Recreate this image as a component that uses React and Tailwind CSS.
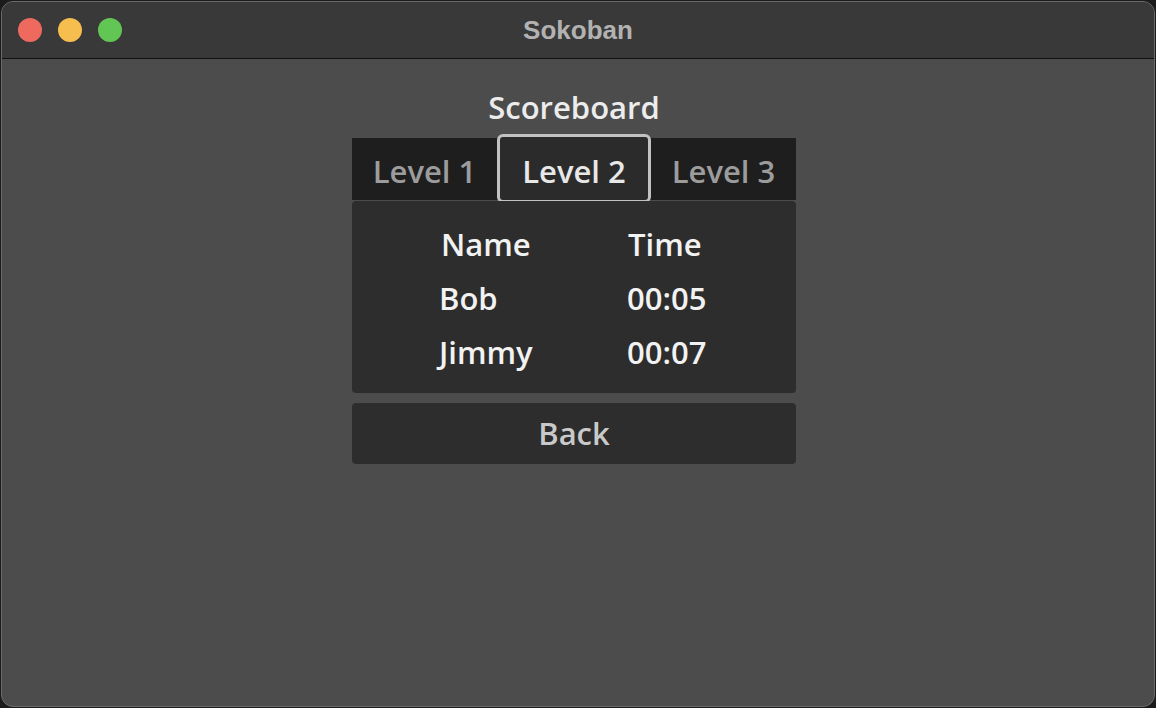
import React, { useState } from "react";

const levels = ["Level 1", "Level 2", "Level 3"];

const scores = [
  { name: "Bob", time: "00:05" },
  { name: "Jimmy", time: "00:07" },
];

const App = () => {
  const [active, setActive] = useState(1);

  return (
    <div className="w-[1156px] h-[708px] bg-[#1b1b1b] p-[1px] overflow-hidden">
      {/* Window */}
      <div className="w-full h-full flex flex-col rounded-[12px] border border-[#6a6a6a] bg-[#4c4c4c] overflow-hidden">
        {/* Title bar */}
        <div className="relative h-[57px] shrink-0 flex items-center bg-[#393939] border-b border-[#111]">
          <div className="flex items-center gap-[16px] pl-[16px]">
            <span className="w-[24px] h-[24px] rounded-full bg-[#ee6a5f]" />
            <span className="w-[24px] h-[24px] rounded-full bg-[#f5be4f]" />
            <span className="w-[24px] h-[24px] rounded-full bg-[#62c655]" />
          </div>
          <div className="absolute inset-0 flex items-center justify-center pointer-events-none">
            <span className="font-['Liberation_Sans',Arial,sans-serif] font-bold text-[26px] text-[#b2b2b2]">
              Sokoban
            </span>
          </div>
        </div>

        {/* Content */}
        <div className="flex-1 flex flex-col items-center pt-[26px] pr-[8px] font-['Open_Sans','Noto_Sans',sans-serif] font-semibold">
          <div className="text-[31px] leading-[44px] text-[#ececec]">Scoreboard</div>

          <div className="w-[444px] mt-[9px] flex flex-col">
            {/* Tabs */}
            <div className="h-[62px] bg-[#1e1e1e] flex items-stretch">
              {levels.map((lvl, i) => (
                <button
                  key={lvl}
                  onClick={() => setActive(i)}
                  className={
                    i === active
                      ? "w-[154px] -mt-[4px] -mb-[3px] pt-[5px] rounded-[6px] border-[3px] border-[#c2c2c2] bg-[#2b2b2b] text-[31px] text-[#e8e8e8]"
                      : "w-[145px] pt-[4px] text-[31px] text-[#9c9c9c]"
                  }
                >
                  {lvl}
                </button>
              ))}
            </div>

            {/* Table */}
            <div className="mt-[1px] h-[192px] rounded-[4px] bg-[#2d2d2d] pt-[16px]">
              <div className="grid grid-cols-[188px_auto] pl-[87px] text-[31px] leading-[54px] text-[#f2f2f2]">
                <div className="pl-[2px]">Name</div>
                <div className="pl-[1px]">Time</div>
                {scores.map((s) => (
                  <React.Fragment key={s.name}>
                    <div>{s.name}</div>
                    <div>{s.time}</div>
                  </React.Fragment>
                ))}
              </div>
            </div>

            {/* Back */}
            <button className="mt-[10px] h-[61px] rounded-[4px] bg-[#2d2d2d] text-[31px] text-[#c9c9c9]">
              Back
            </button>
          </div>
        </div>
      </div>
    </div>
  );
};

export default App;
